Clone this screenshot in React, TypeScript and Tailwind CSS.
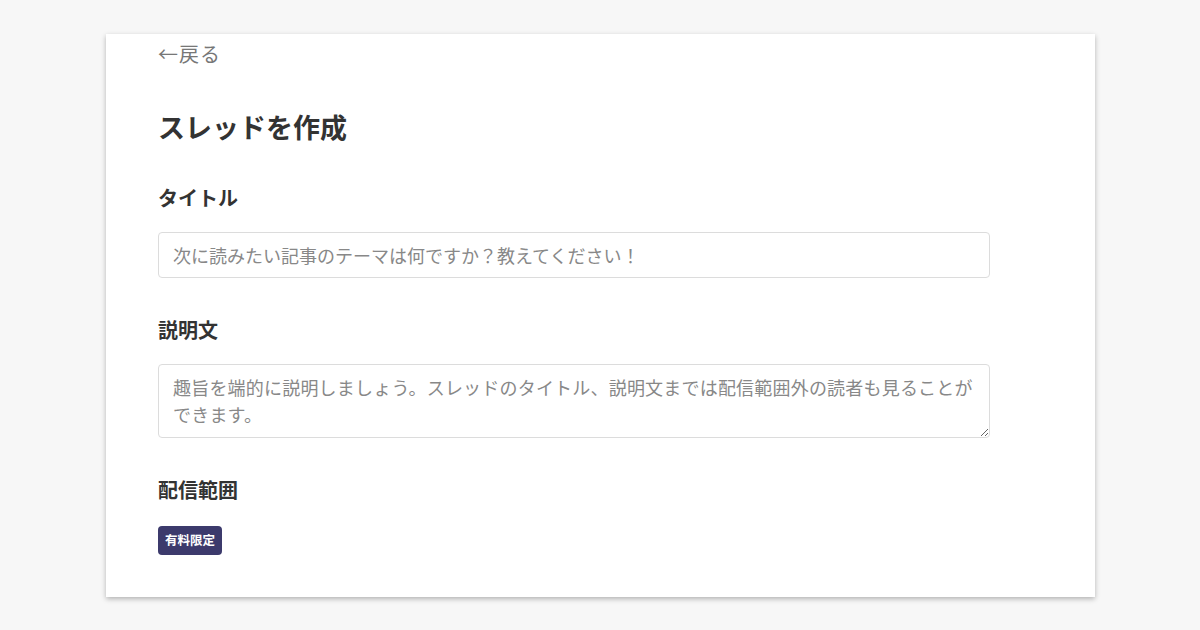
export default function App() {
  const font = { fontFamily: '"Noto Sans CJK JP", "Noto Sans", sans-serif' }

  return (
    <div className="w-[1200px] h-[630px] bg-[#f7f7f7] overflow-hidden" style={font}>
      <div className="ml-[106px] mt-[34px] w-[989px] h-[563px] bg-white shadow-[0_2px_5px_rgba(0,0,0,0.28)] overflow-hidden">
        <div className="pl-[52px] pr-[105px] pt-[5px] flex flex-col">
          {/* back link */}
          <a className="text-[20px] leading-[30px] text-[#777] self-start tracking-[1px]">←戻る</a>

          <h1 className="mt-[38px] text-[27px] leading-[40px] font-bold text-[#333]">スレッドを作成</h1>

          {/* title */}
          <label className="mt-[36px] text-[20px] leading-[30px] font-bold text-[#333]">タイトル</label>
          <input
            readOnly
            className="mt-[19px] h-[46px] w-full border border-[#dcdcdc] rounded-[4px] px-[14px] text-[18px] text-[#333] placeholder:text-[#888] outline-none"
            placeholder="次に読みたい記事のテーマは何ですか？教えてください！"
          />

          {/* description */}
          <label className="mt-[37px] text-[20px] leading-[30px] font-bold text-[#333]">説明文</label>
          <textarea
            readOnly
            className="mt-[19px] h-[74px] w-full border border-[#dcdcdc] rounded-[4px] px-[14px] py-[9px] text-[18px] leading-[27px] tracking-[0.2px] text-[#333] placeholder:text-[#888] outline-none"
            placeholder="趣旨を端的に説明しましょう。スレッドのタイトル、説明文までは配信範囲外の読者も見ることができます。"
          />

          {/* scope */}
          <label className="mt-[37px] text-[20px] leading-[30px] font-bold text-[#333]">配信範囲</label>
          <div className="mt-[21px] flex">
            <span className="h-[29px] px-[7px] flex items-center rounded-[4px] bg-[#3c3a6c] text-white text-[12.5px] font-bold">
              有料限定
            </span>
          </div>
        </div>
      </div>
    </div>
  )
}
